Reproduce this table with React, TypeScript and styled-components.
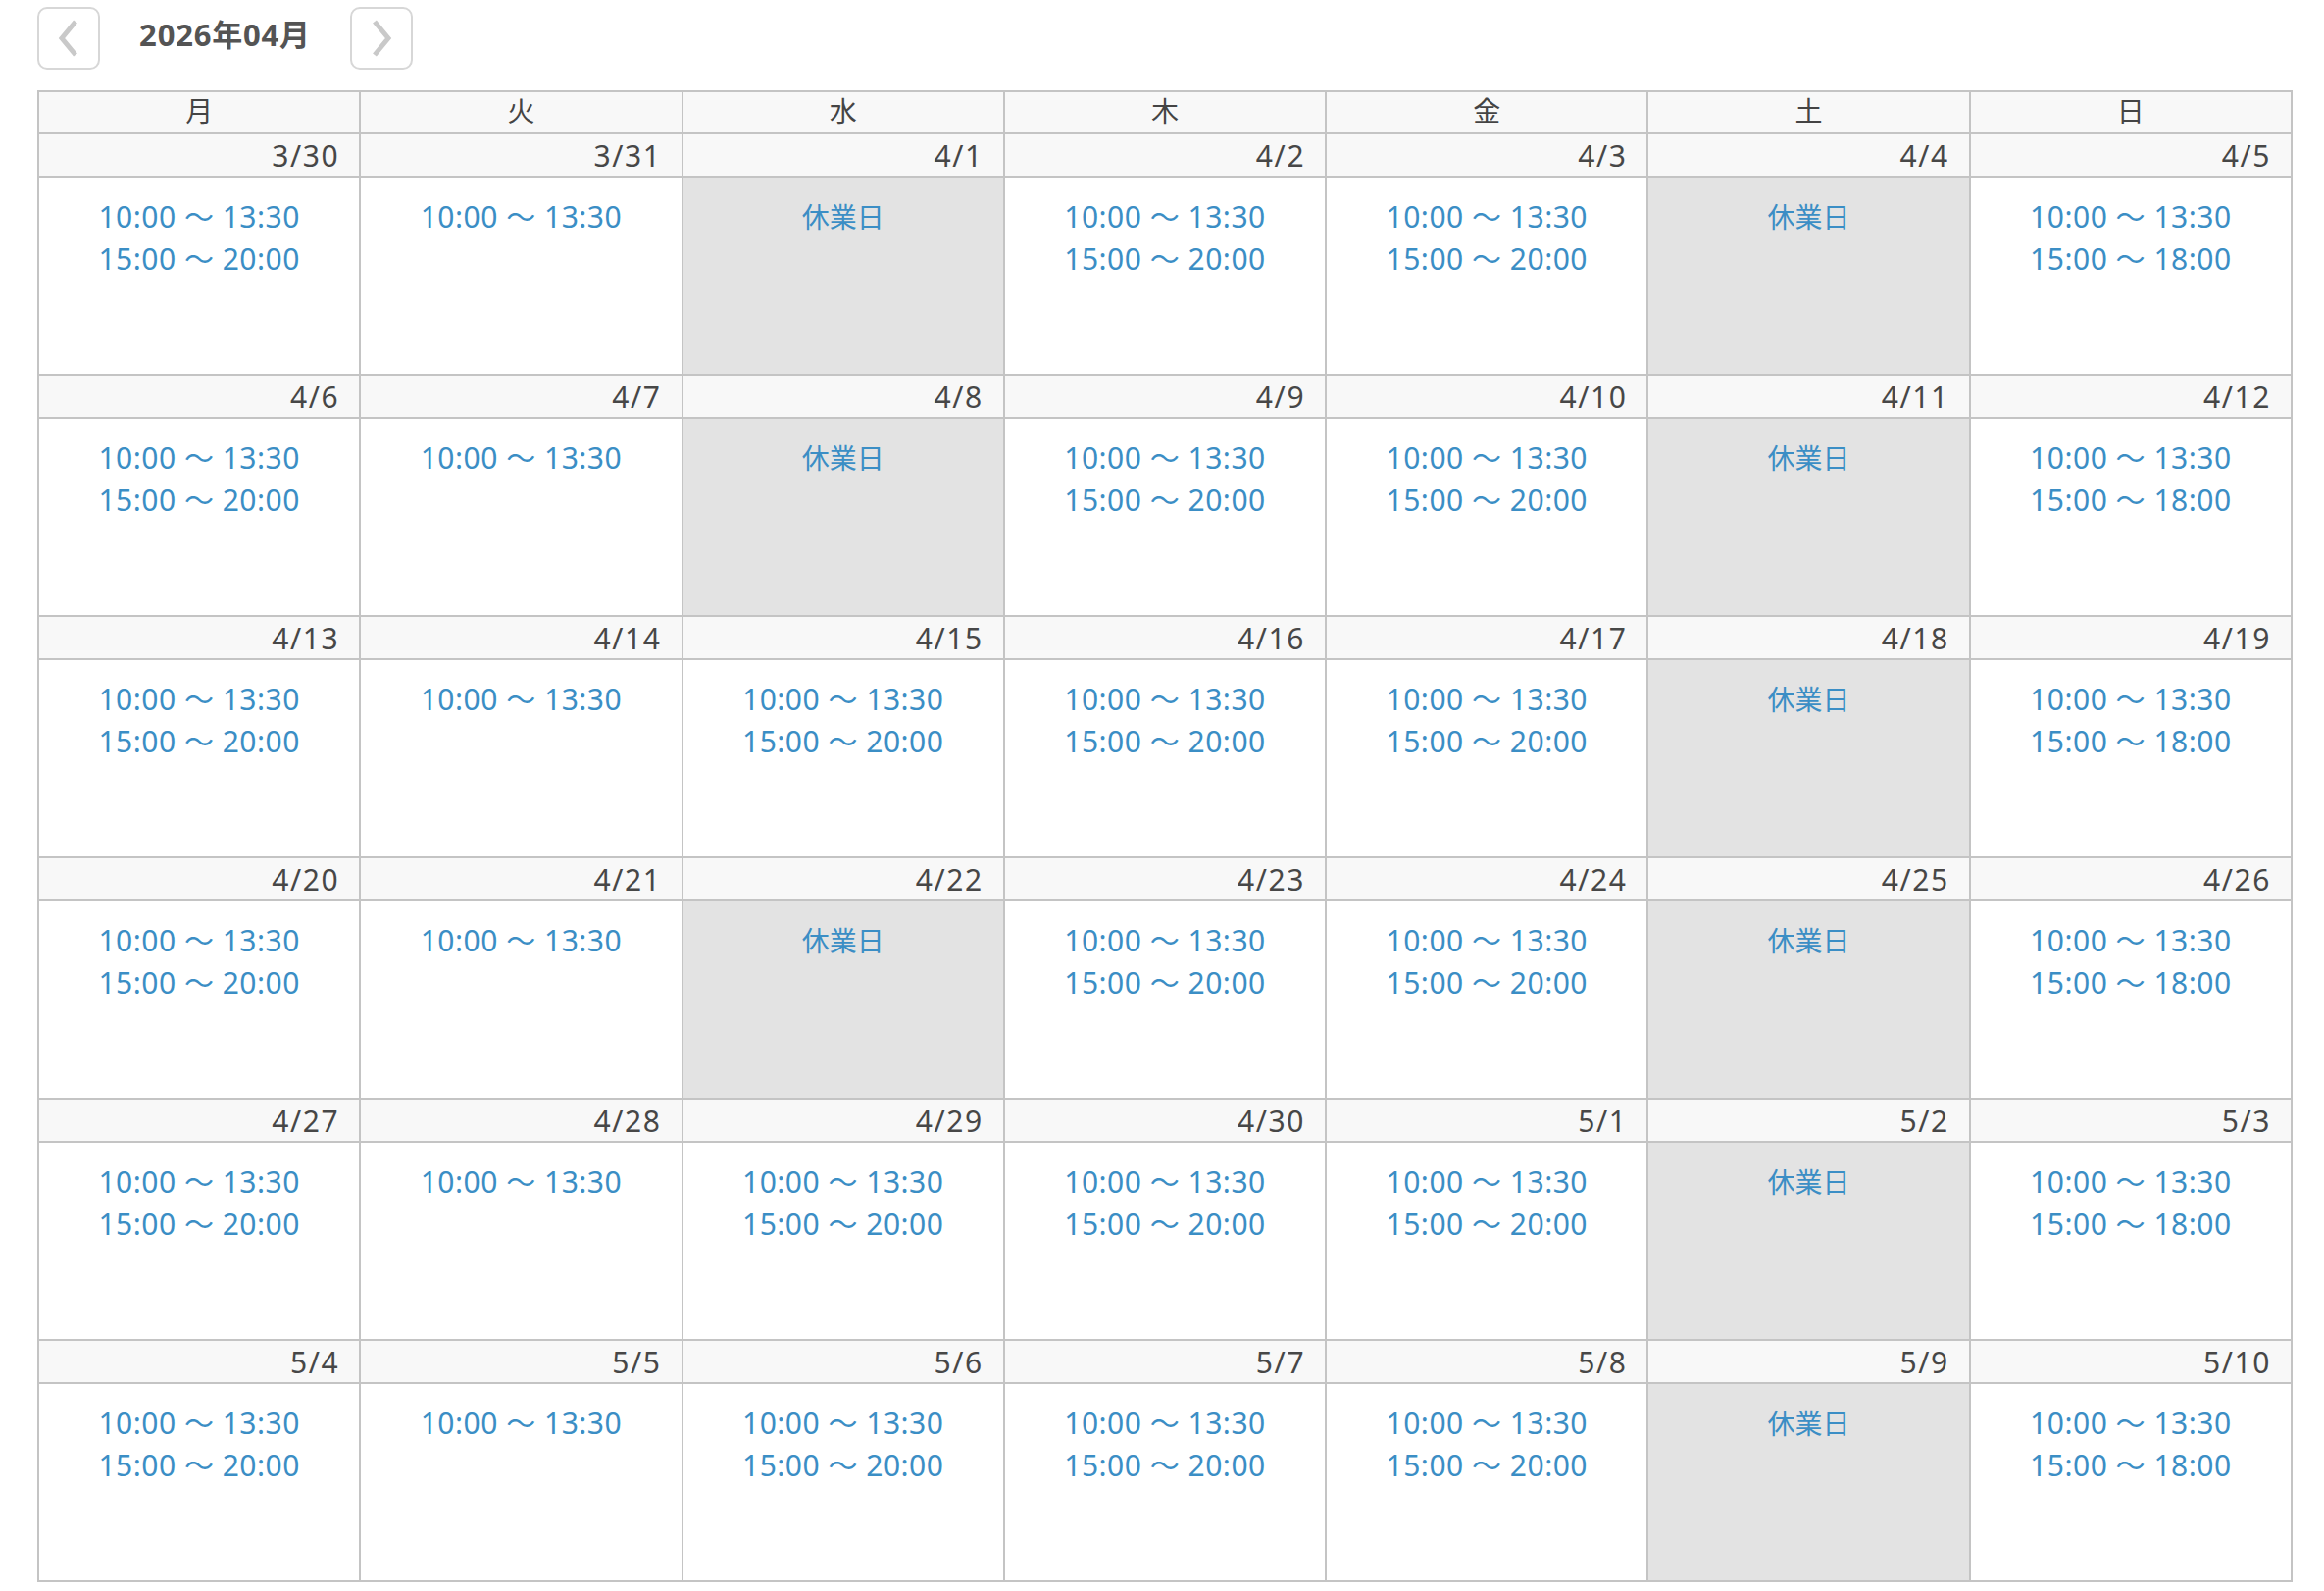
import React from "react";
import styled, { createGlobalStyle } from "styled-components";

const GlobalStyle = createGlobalStyle`
  html, body { margin: 0; padding: 0; background: #ffffff; }
  body { font-family: "Noto Sans", "Noto Sans CJK JP", sans-serif; }
`;

const Page = styled.div`
  padding: 7px 32px 0 38px;
  width: 2300px;
`;

const Toolbar = styled.div`
  display: flex;
  align-items: center;
  height: 64px;
`;

const NavButton = styled.button`
  width: 64px;
  height: 64px;
  box-sizing: border-box;
  border: 2px solid #d7d7d7;
  border-radius: 10px;
  background: #ffffff;
  padding: 0;
  display: flex;
  align-items: center;
  justify-content: center;
  cursor: pointer;
`;

const Title = styled.div`
  width: 255px;
  text-align: center;
  font-family: "Noto Sans", "Noto Sans CJK JP", sans-serif;
  font-weight: 700;
  font-size: 31px;
  line-height: 40px;
  padding-bottom: 8px;
  color: #545454;
  letter-spacing: 0.8px;
`;

const Grid = styled.div`
  margin-top: 21px;
  display: grid;
  grid-template-columns: repeat(7, 1fr);
  border-top: 2px solid #c4c4c4;
  border-left: 2px solid #c4c4c4;
`;

const WeekdayCell = styled.div`
  height: 41px;
  border-right: 2px solid #c4c4c4;
  border-bottom: 2px solid #c4c4c4;
  background: #f8f8f8;
  display: flex;
  align-items: center;
  justify-content: center;
  box-sizing: content-box;
  font-family: "Noto Sans CJK JP", sans-serif;
  font-size: 28px;
  line-height: 36px;
  padding-bottom: 0;
  color: #444444;
  & > span { position: relative; top: -3px; }
`;

const DateCell = styled.div`
  height: 42px;
  border-right: 2px solid #c4c4c4;
  border-bottom: 2px solid #c4c4c4;
  background: #f8f8f8;
  display: flex;
  align-items: center;
  justify-content: flex-end;
  padding-right: 20px;
  font-family: "Noto Sans", sans-serif;
  font-size: 30px;
  color: #474747;
  letter-spacing: 1.6px;
`;

const DayCell = styled.div<{ $closed: boolean }>`
  height: 202px;
  box-sizing: border-box;
  border-right: 2px solid #c4c4c4;
  border-bottom: 2px solid #c4c4c4;
  background: ${(p) => (p.$closed ? "#e3e3e3" : "#ffffff")};
  padding-top: 18px;
  display: flex;
  flex-direction: column;
  align-items: center;
`;

const TimeLine = styled.div`
  font-family: "Noto Sans", "Noto Sans CJK JP", sans-serif;
  font-size: 30px;
  line-height: 43px;
  letter-spacing: 0.5px;
  color: #3b8ec5;
  white-space: pre;
`;

const ClosedLabel = styled.div`
  font-family: "Noto Sans CJK JP", sans-serif;
  font-size: 28px;
  line-height: 43px;
  color: #3b8ec5;
`;

const Chevron = ({ dir }: { dir: "left" | "right" }) => (
  <svg width="22" height="40" viewBox="0 0 22 40" aria-hidden="true">
    <polyline
      points={dir === "left" ? "18,3 4,20 18,37" : "4,3 18,20 4,37"}
      fill="none"
      stroke="#c9c9c9"
      strokeWidth="5"
      strokeLinecap="butt"
      strokeLinejoin="miter"
    />
  </svg>
);

const WEEKDAYS = ["月", "火", "水", "木", "金", "土", "日"];

type Day = { label: string; slots: string[] | null };

const A = "10:00 〜 13:30";
const B20 = "15:00 〜 20:00";
const B18 = "15:00 〜 18:00";

const openWed = new Set(["4/15", "4/29", "5/6"]);

function buildWeeks(): Day[][] {
  const start = new Date(2026, 2, 30);
  const weeks: Day[][] = [];
  for (let w = 0; w < 6; w++) {
    const week: Day[] = [];
    for (let d = 0; d < 7; d++) {
      const dt = new Date(start.getFullYear(), start.getMonth(), start.getDate() + w * 7 + d);
      const label = `${dt.getMonth() + 1}/${dt.getDate()}`;
      let slots: string[] | null;
      switch (d) {
        case 0:
        case 3:
        case 4:
          slots = [A, B20];
          break;
        case 1:
          slots = [A];
          break;
        case 2:
          slots = openWed.has(label) ? [A, B20] : null;
          break;
        case 5:
          slots = null;
          break;
        default:
          slots = [A, B18];
      }
      week.push({ label, slots });
    }
    weeks.push(week);
  }
  return weeks;
}

const weeks = buildWeeks();

export default function App() {
  return (
    <>
      <GlobalStyle />
      <Page>
        <Toolbar>
          <NavButton aria-label="前の月">
            <Chevron dir="left" />
          </NavButton>
          <Title>2026年04月</Title>
          <NavButton aria-label="次の月">
            <Chevron dir="right" />
          </NavButton>
        </Toolbar>
        <Grid>
          {WEEKDAYS.map((w) => (
            <WeekdayCell key={w}>
              <span>{w}</span>
            </WeekdayCell>
          ))}
          {weeks.map((week, wi) => (
            <React.Fragment key={wi}>
              {week.map((day) => (
                <DateCell key={`d-${day.label}`}>{day.label}</DateCell>
              ))}
              {week.map((day) => (
                <DayCell key={`c-${day.label}`} $closed={day.slots === null}>
                  {day.slots === null ? (
                    <ClosedLabel>休業日</ClosedLabel>
                  ) : (
                    day.slots.map((s) => <TimeLine key={s}>{s}</TimeLine>)
                  )}
                </DayCell>
              ))}
            </React.Fragment>
          ))}
        </Grid>
      </Page>
    </>
  );
}
